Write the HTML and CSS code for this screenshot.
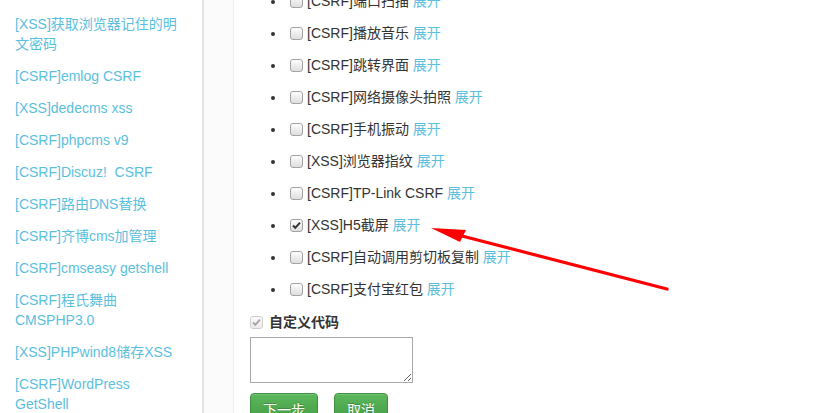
FILE: index.html
```html
<!DOCTYPE html>
<html lang="zh-CN">
<head>
<meta charset="utf-8">
<title>模块选择</title>
<link rel="stylesheet" href="styles.css">
</head>
<body>
<div class="page">
  <aside class="sidebar">
    <ul class="nav">
      <li><a href="#">[XSS]获取浏览器记住的明文密码</a></li>
      <li><a href="#">[CSRF]emlog CSRF</a></li>
      <li><a href="#">[XSS]dedecms xss</a></li>
      <li><a href="#">[CSRF]phpcms v9</a></li>
      <li><a href="#">[CSRF]Discuz!&nbsp; CSRF</a></li>
      <li><a href="#">[CSRF]路由DNS替换</a></li>
      <li><a href="#">[CSRF]齐博cms加管理</a></li>
      <li><a href="#">[CSRF]cmseasy getshell</a></li>
      <li><a href="#">[CSRF]程氏舞曲 CMSPHP3.0</a></li>
      <li><a href="#">[XSS]PHPwind8储存XSS</a></li>
      <li><a href="#">[CSRF]WordPress GetShell</a></li>
    </ul>
  </aside>
  <div class="gutter"></div>
  <main class="content">
    <ul class="modules">
      <li><input type="checkbox" class="cb">[CSRF]端口扫描 <a href="#">展开</a></li>
      <li><input type="checkbox" class="cb">[CSRF]播放音乐 <a href="#">展开</a></li>
      <li><input type="checkbox" class="cb">[CSRF]跳转界面 <a href="#">展开</a></li>
      <li><input type="checkbox" class="cb">[CSRF]网络摄像头拍照 <a href="#">展开</a></li>
      <li><input type="checkbox" class="cb">[CSRF]手机振动 <a href="#">展开</a></li>
      <li><input type="checkbox" class="cb">[XSS]浏览器指纹 <a href="#">展开</a></li>
      <li><input type="checkbox" class="cb">[CSRF]TP-Link CSRF <a href="#">展开</a></li>
      <li><input type="checkbox" class="cb" checked>[XSS]H5截屏 <a href="#">展开</a></li>
      <li><input type="checkbox" class="cb">[CSRF]自动调用剪切板复制 <a href="#">展开</a></li>
      <li><input type="checkbox" class="cb">[CSRF]支付宝红包 <a href="#">展开</a></li>
    </ul>
    <label class="custom"><input type="checkbox" class="cb" checked disabled>自定义代码</label>
    <textarea class="code"></textarea>
    <div class="actions">
      <button class="btn">下一步</button>
      <button class="btn">取消</button>
    </div>
  </main>
  <svg class="arrow" width="825" height="413" viewBox="0 0 825 413">
    <line x1="462" y1="236" x2="667" y2="289" stroke="#ff0000" stroke-width="3.2" stroke-linecap="round"/>
    <polygon points="431,228 466,230 460,242" fill="#ff0000"/>
  </svg>
</div>
</body>
</html>
```

FILE: styles.css
```css
* { box-sizing: border-box; }

html, body {
  margin: 0;
  padding: 0;
  height: 413px;
  overflow: hidden;
  background: #fff;
}

body {
  font-family: "Liberation Sans", "Noto Sans CJK SC", sans-serif;
  font-size: 14px;
  line-height: 20px;
  color: #333;
}

a {
  color: #5bc0de;
  text-decoration: none;
}

.page {
  position: relative;
  display: flex;
  height: 413px;
}

.sidebar {
  width: 204px;
  flex: none;
  border-right: 2px solid #e4e4e4;
  padding-top: 8px;
}

.nav {
  list-style: none;
  margin: 0;
  padding: 0;
}

.nav a {
  display: block;
  padding: 6px 18px 6px 15px;
}

.gutter {
  width: 30px;
  flex: none;
  background: #fbfbfb;
  border-right: 1px solid #f0f0f0;
}

.content {
  flex: 1;
  padding-left: 16px;
}

.modules {
  margin: -15px 0 0;
  padding-left: 36px;
}

.modules li {
  padding: 6px 0;
}

.cb {
  -webkit-appearance: none;
  appearance: none;
  width: 13px;
  height: 13px;
  margin: 0 4px 0 4px;
  vertical-align: -2px;
  border: 1px solid #a3a3a3;
  border-radius: 3px;
  background: linear-gradient(#fdfdfd, #dedede);
}

.cb:checked {
  background: url("data:image/svg+xml;utf8,<svg xmlns='http://www.w3.org/2000/svg' viewBox='0 0 11 11'><path d='M2 5.5l2.3 2.3L9 2.6' fill='none' stroke='%23333' stroke-width='2'/></svg>") center / 11px 11px no-repeat, linear-gradient(#fdfdfd, #dedede);
}

.cb:disabled:checked {
  border-color: #cfcfcf;
  background: url("data:image/svg+xml;utf8,<svg xmlns='http://www.w3.org/2000/svg' viewBox='0 0 11 11'><path d='M2 5.5l2.3 2.3L9 2.6' fill='none' stroke='%23a8a8a8' stroke-width='2'/></svg>") center / 11px 11px no-repeat, linear-gradient(#fafafa, #ececec);
}

.custom {
  display: block;
  margin-top: 7px;
  font-weight: bold;
}

.custom .cb {
  margin: 0 6px 0 0;
}

.code {
  display: block;
  width: 163px;
  height: 46px;
  margin-top: 5px;
  border: 1px solid #a9a9a9;
  padding: 2px;
  font-family: "Liberation Mono", monospace;
}

.actions {
  display: flex;
  gap: 16px;
  margin-top: 10px;
}

.btn {
  font-family: inherit;
  font-size: 14px;
  line-height: 20px;
  padding: 6px 12px;
  color: #fff;
  border: 1px solid #3e8f3e;
  border-radius: 4px;
  background: linear-gradient(#5cb85c, #419641);
  text-shadow: 0 -1px 0 rgba(0,0,0,.2);
  box-shadow: inset 0 1px 0 rgba(255,255,255,.15), 0 1px 1px rgba(0,0,0,.075);
  height: 34px;
}

.arrow {
  position: absolute;
  left: 0;
  top: 0;
  pointer-events: none;
}
```
